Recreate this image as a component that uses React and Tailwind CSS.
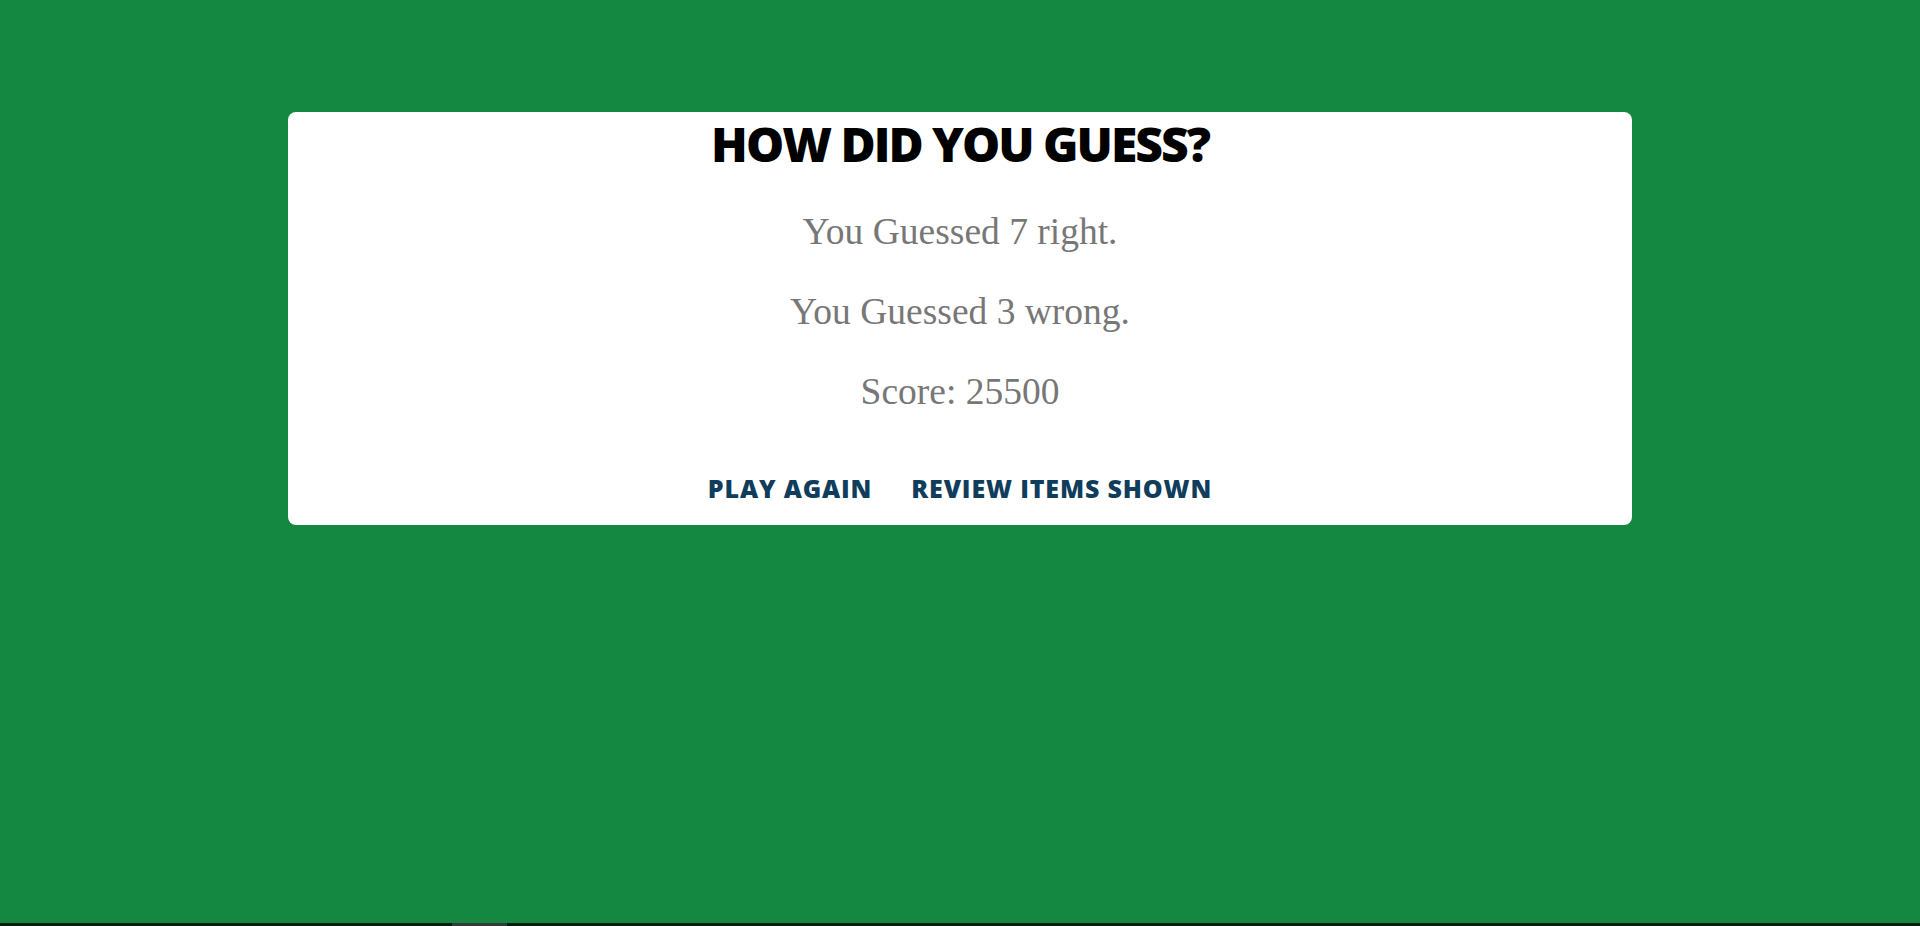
export default function App() {
  return (
    <div className="h-[926px] w-full bg-[#148741] flex flex-col overflow-hidden">
      <div className="flex-1">
        <div className="mx-auto mt-[112px] w-[1344px] h-[413px] bg-white rounded-lg flex flex-col items-center pt-[8px]">
          <h1 className="text-[48px] leading-[48px] font-extrabold tracking-[-2px] text-black" style={{ fontFamily: '"Open Sans", sans-serif' }}>
            HOW DID YOU GUESS?
          </h1>
          <div className="mt-[44px] flex flex-col items-center gap-[40px] text-[#777777]" style={{ fontFamily: '"Liberation Serif", serif' }}>
            <p className="text-[37.5px] leading-[40px]">You Guessed 7 right.</p>
            <p className="text-[37.5px] leading-[40px]">You Guessed 3 wrong.</p>
            <p className="text-[37.5px] leading-[40px]">Score: 25500</p>
          </div>
          <div className="mt-[60px] flex gap-[39px] text-[#0f3d5b] text-[25px] leading-[32px] font-extrabold tracking-[0.85px]" style={{ fontFamily: '"Open Sans", sans-serif' }}>
            <button>PLAY AGAIN</button>
            <button>REVIEW ITEMS SHOWN</button>
          </div>
        </div>
      </div>
      <div className="h-[3px] bg-[#0b1a10] relative">
        <div className="absolute left-[452px] top-0 h-[3px] w-[55px] bg-[#3a3a3a]" />
      </div>
    </div>
  );
}
